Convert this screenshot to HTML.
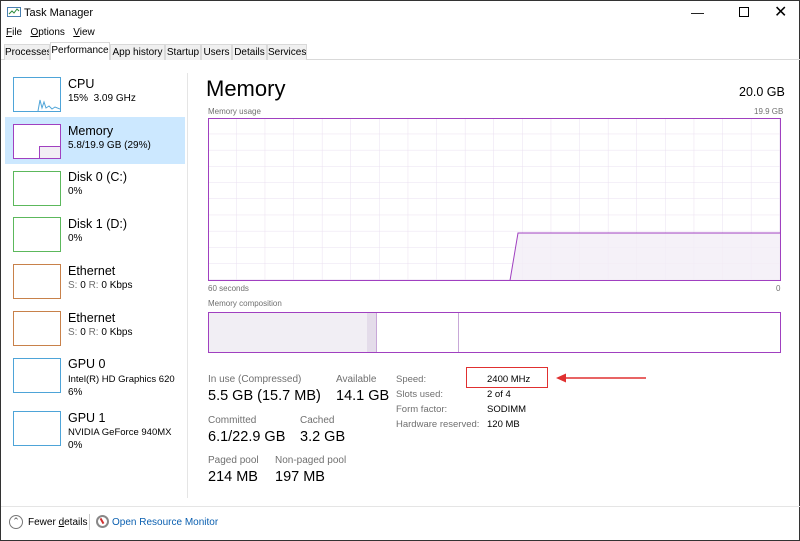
<!DOCTYPE html>
<html><head><style>
*{margin:0;padding:0;box-sizing:border-box}
body{width:800px;height:541px;overflow:hidden;background:#fff;font-family:"Liberation Sans",sans-serif;color:#000;position:relative;border:1px solid #333}
.a{position:absolute;white-space:nowrap}
.s{font-size:10px}
.g{color:#707070}
.tab{position:absolute;top:43px;height:16px;font-size:10px;padding:2px 0;text-align:center;border:1px solid #d9d9d9;border-bottom:none;background:#f0f0f0;overflow:hidden}
.th{position:absolute;left:12px;width:48px;height:35px;border:1px solid}
.n{font-size:12.5px}
</style></head><body>
<svg class="a" style="left:6px;top:6px" width="14" height="12"><rect x=".5" y=".5" width="13" height="9" fill="#fff" stroke="#4a7fb0"/><path d="M2 7l3-3 2 2 3-4 2 2" stroke="#2a8a3a" fill="none"/></svg>
<div class="a" style="left:23px;top:6px;font-size:11px">Task Manager</div>
<div class="a" style="left:690px;top:4px;font-size:13px">—</div>
<div class="a" style="left:738px;top:6px;width:10px;height:10px;border:1px solid #000"></div>
<div class="a" style="left:773px;top:1px;font-size:16px">✕</div>
<div class="a s" style="left:5px;top:26px"><u>F</u>ile&nbsp;&nbsp;&nbsp;<u>O</u>ptions&nbsp;&nbsp;&nbsp;<u>V</u>iew</div>
<div class="a" style="left:0;top:58px;width:800px;height:1px;background:#d9d9d9"></div>
<div class="tab" style="left:3px;width:46px">Processes</div>
<div class="tab" style="left:49px;top:41px;height:18px;width:60px;background:#fff">Performance</div>
<div class="tab" style="left:109px;width:55px">App history</div>
<div class="tab" style="left:164px;width:36px">Startup</div>
<div class="tab" style="left:200px;width:31px">Users</div>
<div class="tab" style="left:231px;width:35px">Details</div>
<div class="tab" style="left:266px;width:40px">Services</div>
<div class="a" style="left:186px;top:72px;width:1px;height:425px;background:#e5e5e5"></div>
<div class="a" style="left:4px;top:116px;width:180px;height:47px;background:#cce8ff"></div>
<div class="th" style="top:76px;border-color:#4ea4d8"><svg width="46" height="33"><path d="M24 33 L26 22 L28 30 L30 24 L32 30 L35 28 L38 31 L41 29 L46 31" stroke="#4ea4d8" fill="none"/></svg></div>
<div class="a n" style="left:67px;top:76px">CPU</div><div class="a s" style="left:67px;top:92px">15%&nbsp; 3.09 GHz</div>
<div class="th" style="top:123px;border-color:#a040c0;background:#fff"><div style="position:absolute;left:25px;top:21px;width:22px;height:13px;border:1px solid #a040c0;background:#f2eef4"></div></div>
<div class="a n" style="left:67px;top:123px">Memory</div><div class="a s" style="left:67px;top:139px">5.8/19.9 GB (29%)</div>
<div class="th" style="top:170px;border-color:#5cb85c"></div>
<div class="a n" style="left:67px;top:169px">Disk 0 (C:)</div><div class="a s" style="left:67px;top:185px">0%</div>
<div class="th" style="top:216px;border-color:#5cb85c"></div>
<div class="a n" style="left:67px;top:216px">Disk 1 (D:)</div><div class="a s" style="left:67px;top:232px">0%</div>
<div class="th" style="top:263px;border-color:#c8814a"></div>
<div class="a n" style="left:67px;top:263px">Ethernet</div><div class="a s" style="left:67px;top:279px"><span class="g">S:</span> 0 <span class="g">R:</span> 0 Kbps</div>
<div class="th" style="top:310px;border-color:#c8814a"></div>
<div class="a n" style="left:67px;top:310px">Ethernet</div><div class="a s" style="left:67px;top:326px"><span class="g">S:</span> 0 <span class="g">R:</span> 0 Kbps</div>
<div class="th" style="top:357px;border-color:#4ea4d8"></div>
<div class="a n" style="left:67px;top:356px">GPU 0</div><div class="a s" style="left:67px;top:373px;font-size:9.5px">Intel(R) HD Graphics 620</div><div class="a s" style="left:67px;top:386px">6%</div>
<div class="th" style="top:410px;border-color:#4ea4d8"></div>
<div class="a n" style="left:67px;top:410px">GPU 1</div><div class="a s" style="left:67px;top:426px;font-size:9.5px">NVIDIA GeForce 940MX</div><div class="a s" style="left:67px;top:439px">0%</div>

<div class="a" style="left:205px;top:75px;font-size:22px">Memory</div>
<div class="a" style="left:738px;top:84px;font-size:12.5px">20.0 GB</div>
<div class="a g" style="left:207px;top:106px;font-size:8px">Memory usage</div>
<div class="a g" style="left:753px;top:106px;font-size:8px">19.9 GB</div>
<svg class="a" style="left:207px;top:117px" width="573" height="163">
<defs><pattern id="p" width="28.6" height="16.2" patternUnits="userSpaceOnUse"><path d="M28.6 0V16.2M0 16.2H28.6" stroke="#eadff0" fill="none"/></pattern></defs>
<rect width="573" height="163" fill="url(#p)"/>
<path d="M302 162.5 L310 115 L572 115 L572 162.5Z" fill="#f3eef6" fill-opacity=".8"/>
<path d="M302 162.5 L310 115 L572 115" stroke="#a040c0" fill="none"/>
<rect x=".5" y=".5" width="572" height="162" fill="none" stroke="#a040c0"/>
</svg>
<div class="a g" style="left:207px;top:283px;font-size:8px">60 seconds</div>
<div class="a g" style="left:775px;top:283px;font-size:8px">0</div>
<div class="a g" style="left:207px;top:298px;font-size:8px">Memory composition</div>
<div class="a" style="left:207px;top:311px;width:573px;height:41px;border:1px solid #a040c0">
<div class="a" style="left:0;top:0;width:158px;height:39px;background:#f1eef4"></div>
<div class="a" style="left:158px;top:0;width:9px;height:39px;background:#e4dcea"></div>
<div class="a" style="left:167px;top:0;width:1px;height:39px;background:#c8a8d8"></div>
<div class="a" style="left:249px;top:0;width:1px;height:39px;background:#c8a8d8"></div>
</div>
<div class="a g s" style="left:207px;top:373px">In use (Compressed)</div>
<div class="a g s" style="left:335px;top:373px">Available</div>
<div class="a" style="left:207px;top:387px;font-size:14.5px">5.5 GB (15.7 MB)</div>
<div class="a" style="left:335px;top:387px;font-size:14.5px">14.1 GB</div>
<div class="a g s" style="left:207px;top:414px">Committed</div>
<div class="a g s" style="left:299px;top:414px">Cached</div>
<div class="a" style="left:207px;top:428px;font-size:14.5px">6.1/22.9 GB</div>
<div class="a" style="left:299px;top:428px;font-size:14.5px">3.2 GB</div>
<div class="a g s" style="left:207px;top:454px">Paged pool</div>
<div class="a g s" style="left:274px;top:454px">Non-paged pool</div>
<div class="a" style="left:207px;top:468px;font-size:14.5px">214 MB</div>
<div class="a" style="left:274px;top:468px;font-size:14.5px">197 MB</div>
<div class="a g" style="left:395px;top:371px;font-size:9.5px;line-height:15px">Speed:<br>Slots used:<br>Form factor:<br>Hardware reserved:</div>
<div class="a" style="left:486px;top:371px;font-size:9.5px;line-height:15px">2400 MHz<br>2 of 4<br>SODIMM<br>120 MB</div>
<div class="a" style="left:465px;top:366px;width:82px;height:21px;border:1.5px solid #e03030"></div>
<svg class="a" style="left:553px;top:371px" width="95" height="12"><path d="M10 6H92" stroke="#e03030" stroke-width="1.5"/><path d="M2 6L12 1.5V10.5Z" fill="#e03030"/></svg>
<div class="a" style="left:0;top:505px;width:800px;height:1px;background:#e5e5e5"></div>
<div class="a" style="left:8px;top:514px;width:14px;height:14px;border:1px solid #777;border-radius:50%;font-size:9px;text-align:center;line-height:11px;color:#555">⌃</div>
<div class="a s" style="left:27px;top:516px">Fewer <u>d</u>etails</div>
<div class="a" style="left:88px;top:513px;width:1px;height:16px;background:#ccc"></div>
<div class="a" style="left:95px;top:514px;width:13px;height:13px;border:2px solid #888;border-radius:50%;background:#fff"><div style="position:absolute;left:3px;top:1px;width:2px;height:6px;background:#d03030;transform:rotate(-30deg)"></div></div>
<div class="a s" style="left:111px;top:516px;color:#0a5fb0">Open Resource Monitor</div>
</body></html>
